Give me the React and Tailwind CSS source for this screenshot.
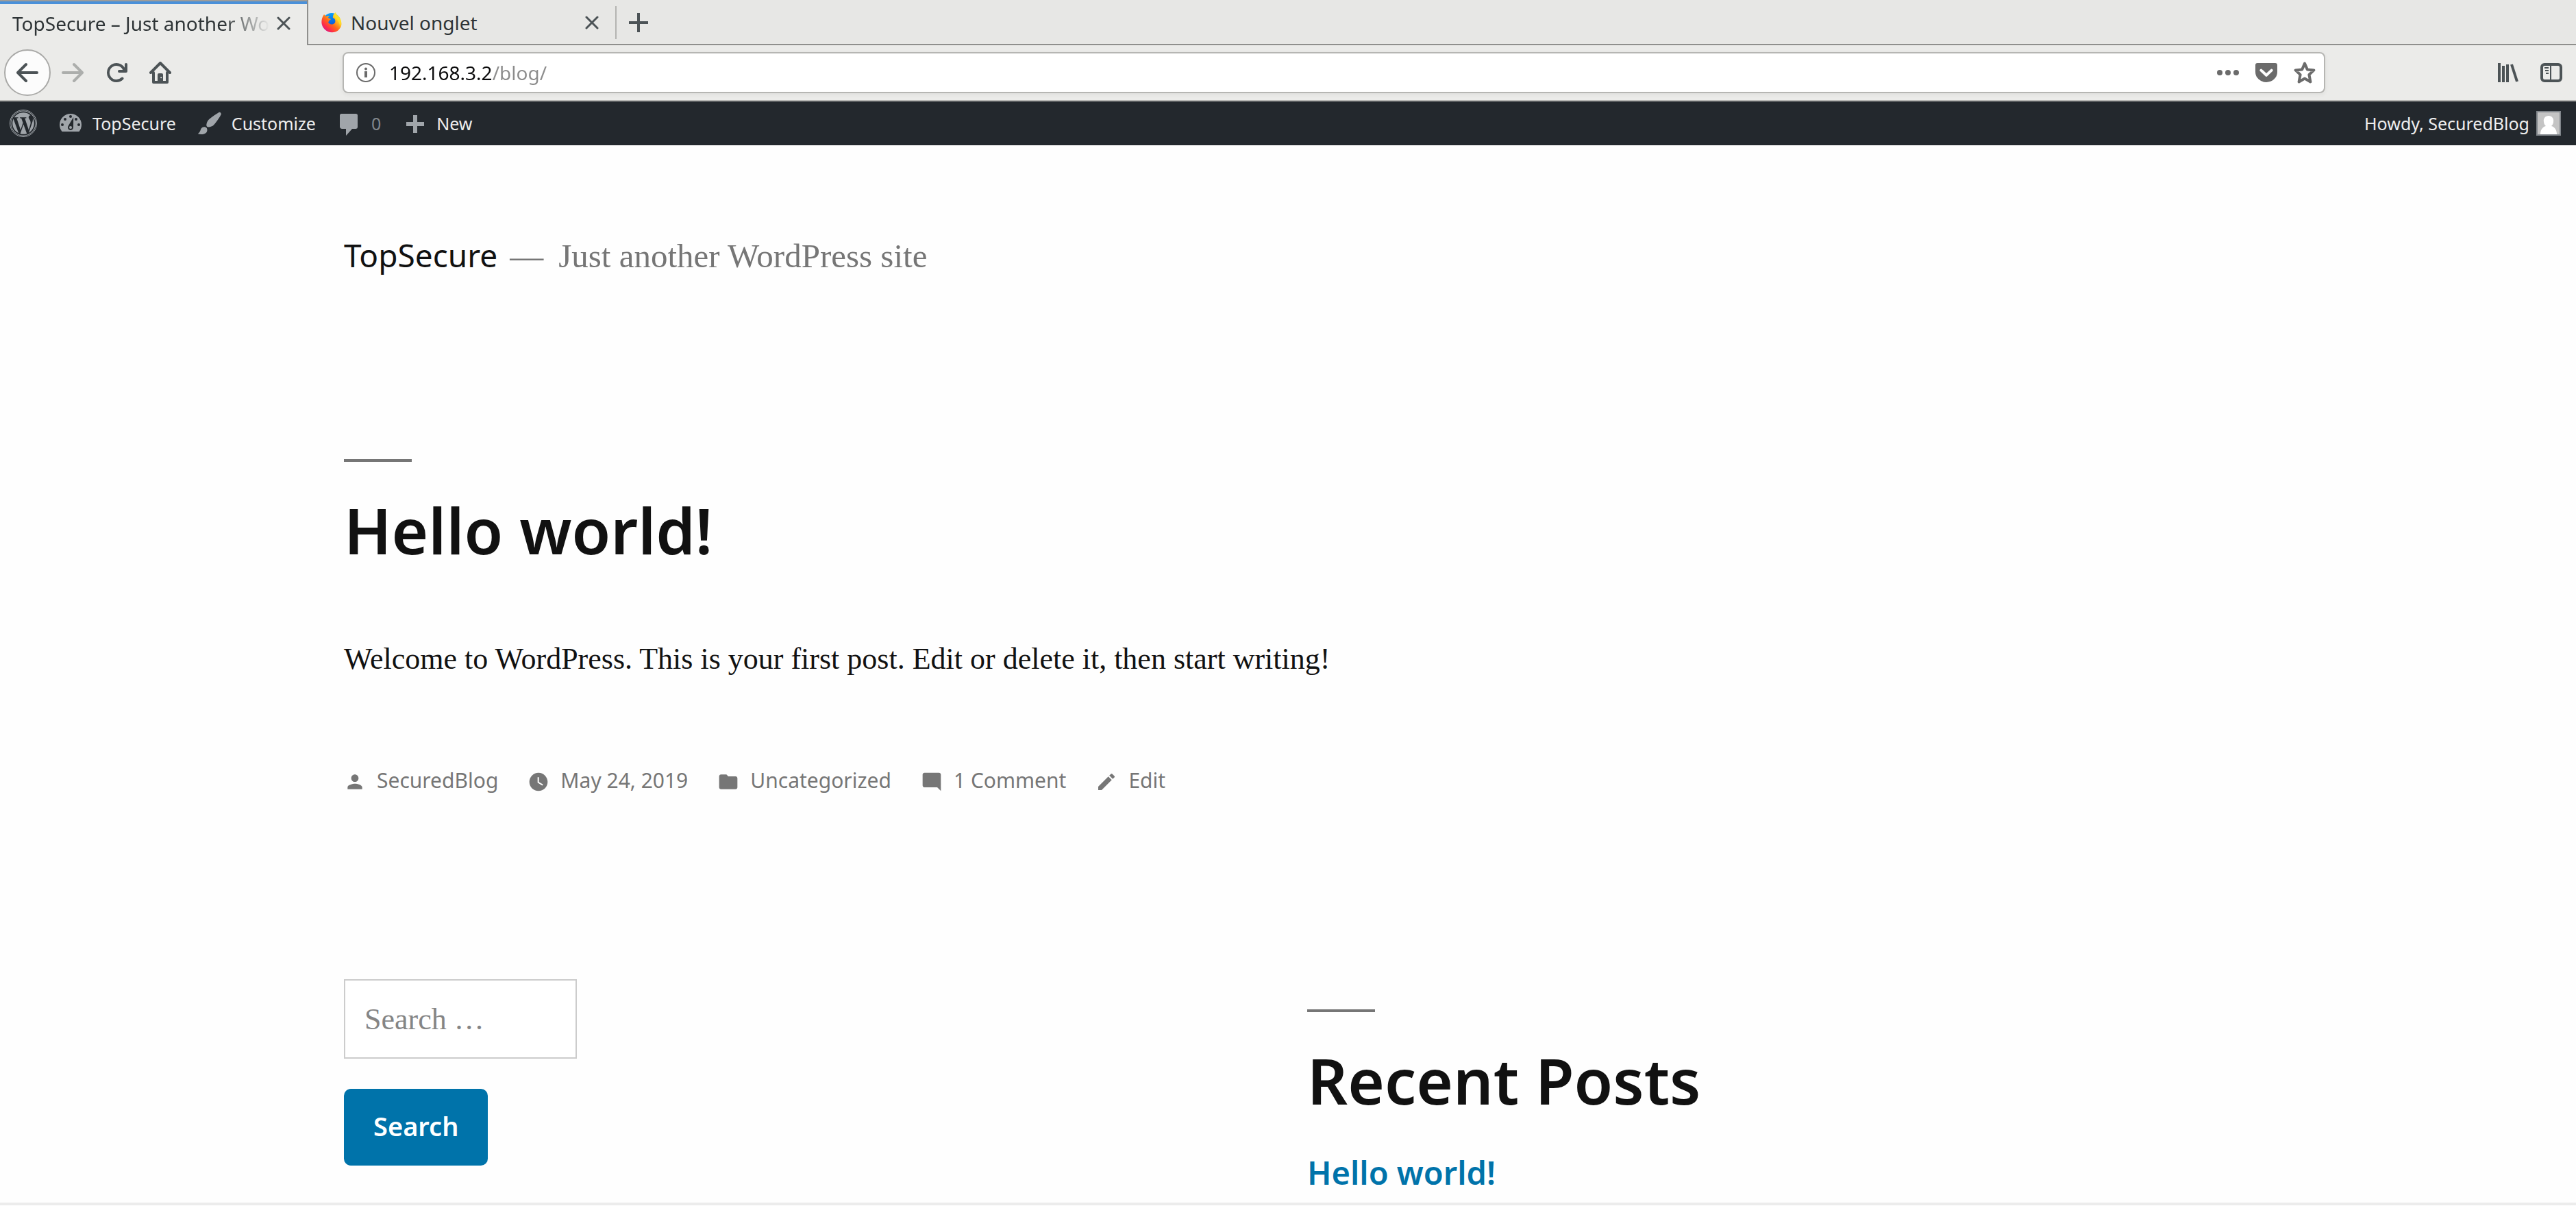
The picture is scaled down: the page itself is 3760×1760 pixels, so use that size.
import React from "react";
import { FaWordpress } from "react-icons/fa";
import { MdPerson, MdWatchLater, MdFolder, MdModeComment, MdEdit } from "react-icons/md";

const sans = "font-['Noto_Sans',sans-serif]";
const serif = "font-['Liberation_Serif',serif]";

function CloseIcon() {
  return (
    <svg viewBox="0 0 20 20" className="size-5" fill="none" stroke="#4c5356" strokeWidth="3" strokeLinecap="round" aria-hidden="true">
      <path d="M2 2l16 16M18 2L2 18" />
    </svg>
  );
}

function FirefoxIcon() {
  return (
    <svg viewBox="0 0 32 32" className="size-8 shrink-0" aria-hidden="true">
      <defs>
        <linearGradient id="flame" x1="0.85" y1="0.1" x2="0.15" y2="0.9">
          <stop offset="0" stopColor="#fff44f" />
          <stop offset="0.3" stopColor="#ffb81f" />
          <stop offset="0.55" stopColor="#ff6b1a" />
          <stop offset="0.8" stopColor="#ff2f45" />
          <stop offset="1" stopColor="#d6188a" />
        </linearGradient>
        <linearGradient id="globe" x1="0.3" y1="0" x2="0.6" y2="1">
          <stop offset="0" stopColor="#0aa5ff" />
          <stop offset="0.6" stopColor="#0a62e0" />
          <stop offset="1" stopColor="#2b2a9c" />
        </linearGradient>
      </defs>
      <circle cx="16" cy="15" r="13" fill="url(#globe)" />
      <path
        fill="url(#flame)"
        d="M5 4c1 1 2 2 3 3 1-1 3-1 5-1-1 1-2 2-2 3 1 1 3 1 4 2-1 1-2 2-3 2 0 1 0 2-1 2 1 4 7 5 10 1 1-3 0-6-3-7 0 0-1-5 4-8 0 3 3 4 6 8 4 8 3 13-2 18-6 5-15 4-20-1C0 20 0 11 5 4z"
      />
      <path fill="#ffe226" d="M22 1c0 3 3 4 6 8 3 6 2 10 0 13 0-5-2-8-5-11-3-3-4-6-1-10z" opacity="0.8" />
    </svg>
  );
}

const ARROW =
  "M15 7H3.414l4.293-4.293a1 1 0 0 0-1.414-1.414l-6 6a1 1 0 0 0 0 1.414l6 6a1 1 0 0 0 1.414-1.414L3.414 9H15a1 1 0 0 0 0-2z";

function Tabs() {
  return (
    <div className="flex h-[66px] bg-[#e7e7e5] text-[28px] leading-[40px] text-[#2e3436]">
      <div className="flex w-[448px] shrink-0 flex-col bg-[#ebebe9]">
        <div className="h-[6px] border-t-2 border-[#9c9c9a] bg-[#4a90d9]" />
        <div className="flex flex-1 items-center gap-[10px] pr-6 pb-1 pl-[18px]">
          <span className="flex-1 whitespace-nowrap [mask-image:linear-gradient(to_right,#000_82%,transparent)]">
            TopSecure – Just another Wo
          </span>
          <button aria-label="Close tab TopSecure" className="shrink-0">
            <CloseIcon />
          </button>
        </div>
      </div>
      <div className="flex flex-1 items-center border-b-2 border-l-2 border-[#8f8f8d] pt-[2px]">
        <div className="flex w-[448px] items-center gap-3 pr-6 pl-[18px]">
          <FirefoxIcon />
          <span className="flex-1">Nouvel onglet</span>
          <button aria-label="Close tab Nouvel onglet">
            <CloseIcon />
          </button>
        </div>
        <div className="h-12 w-[2px] bg-[#b4b4b1]" />
        <button aria-label="New tab" className="ml-[18px]">
          <svg viewBox="0 0 28 28" className="size-7" fill="none" stroke="#4c5356" strokeWidth="4" aria-hidden="true">
            <path d="M14 0v28M0 14h28" />
          </svg>
        </button>
      </div>
    </div>
  );
}

function NavButton({ label, children }) {
  return (
    <button aria-label={label} className="flex h-[68px] w-16 shrink-0 items-center justify-center text-[#4c5356]">
      {children}
    </button>
  );
}

function Toolbar() {
  return (
    <div className="flex h-[82px] items-center border-b-2 border-[#b6b6b3] bg-[#ebebe9] pr-1 pl-[6px]">
      <button aria-label="Back" className="flex size-[68px] shrink-0 items-center justify-center rounded-full border-2 border-[#aaaaa8] bg-[#fcfcfc] text-[#4c5356]">
        <svg viewBox="0 0 16 16" className="size-8" fill="currentColor"><path d={ARROW} /></svg>
      </button>
      <NavButton label="Forward">
        <svg viewBox="0 0 16 16" className="size-8 rotate-180 text-[#acaeac]" fill="currentColor"><path d={ARROW} /></svg>
      </NavButton>
      <NavButton label="Reload">
        <svg viewBox="0 0 16 16" className="size-8" fill="currentColor">
          <path d="M15 1a1 1 0 0 0-1 1v2.418A6.995 6.995 0 1 0 8 15a6.954 6.954 0 0 0 4.950-2.050 1 1 0 0 0-1.414-1.414A5.019 5.019 0 1 1 12.549 6H10a1 1 0 0 0 0 2h5a1 1 0 0 0 1-1V2a1 1 0 0 0-1-1z" />
        </svg>
      </NavButton>
      <NavButton label="Home">
        <svg viewBox="0 0 16 16" className="size-8" fill="none" stroke="currentColor" strokeWidth="2" strokeLinecap="round" strokeLinejoin="round">
          <path d="M1 8l7-7 7 7M3 8v7h10V8" />
          <path d="M6 15V9.500a1 1 0 0 1 1-1h2a1 1 0 0 1 1 1V15z" fill="currentColor" stroke="none" />
          <circle cx="8.600" cy="11.600" r=".5" fill="#ebebe9" stroke="none" />
        </svg>
      </NavButton>
      <div className="mr-[234px] ml-[234px] flex h-[60px] min-w-0 flex-1 items-center rounded-[8px] border-2 border-[#b6b6b3] bg-white pr-3 pl-[18px] text-[#6b6b6b] shadow-[0_2px_6px_rgba(0,0,0,0.06)]">
        <svg viewBox="0 0 28 28" className="size-7 shrink-0" fill="none" stroke="currentColor" aria-hidden="true">
          <circle cx="14" cy="14" r="13" strokeWidth="2" />
          <path d="M14 12v9" strokeWidth="4" />
          <circle cx="14" cy="8.500" r="2" fill="currentColor" stroke="none" />
        </svg>
        <input
          aria-label="Address"
          defaultValue="192.168.3.2/blog/"
          className="ml-5 h-12 min-w-0 flex-1 bg-[linear-gradient(90deg,#0c0c0d_151px,#8c8c8c_151px)] bg-clip-text text-[28px] leading-[40px] text-transparent outline-none"
        />
        <div className="flex items-center gap-6">
          <button aria-label="Page actions">
            <svg viewBox="0 0 16 16" className="size-8" fill="currentColor">
              <circle cx="2" cy="8" r="2" /><circle cx="8" cy="8" r="2" /><circle cx="14" cy="8" r="2" />
            </svg>
          </button>
          <button aria-label="Save to Pocket">
            <svg viewBox="0 0 16 16" className="size-8">
              <path fill="currentColor" d="M1.500 1h13A1.500 1.500 0 0 1 16 2.500V7.500a8 7.500 0 0 1-16 0V2.500A1.500 1.500 0 0 1 1.500 1z" />
              <path fill="none" stroke="#fff" strokeWidth="2" strokeLinecap="round" strokeLinejoin="round" d="M4.200 6.300L8 9.900l3.800-3.600" />
            </svg>
          </button>
          <button aria-label="Bookmark this page">
            <svg viewBox="0 0 16 16" className="size-8" fill="none" stroke="currentColor" strokeWidth="2" strokeLinejoin="round">
              <path d="M8 1.300l1.900 4.400 4.800.5-3.500 3.300 1 5.200L8 12.300l-4.200 2.400 1-5.200L1.300 6.200l4.800-.5z" />
            </svg>
          </button>
        </div>
      </div>
      <NavButton label="Library">
        <svg viewBox="0 0 32 32" className="size-8" fill="none" stroke="currentColor" strokeWidth="4">
          <path d="M4 2v28M10 6v24M16 4v26M22 4l8 25" />
        </svg>
      </NavButton>
      <NavButton label="Sidebar">
        <svg viewBox="0 0 32 32" className="size-8" fill="none" stroke="currentColor">
          <rect x="2" y="4" width="28" height="24" rx="4" strokeWidth="4" />
          <path d="M15 4v24M6 9h6M7 13h5M8 17h4" strokeWidth="2" />
        </svg>
      </NavButton>
    </div>
  );
}

const BAR_ICONS = {
  dashboard: (
    <>
      <path d="M3.760 16h12.480c1.100-1.370 1.760-3.110 1.760-5 0-4.420-3.580-8-8-8s-8 3.580-8 8c0 1.890.66 3.630 1.760 5z" />
      <g className="fill-[#23282d]">
        <circle cx="10" cy="5" r="1" /><circle cx="6" cy="7" r="1" /><circle cx="14" cy="7" r="1" />
        <circle cx="4" cy="11" r="1" /><circle cx="16" cy="11" r="1" />
        <path d="M12.100 5.500L12 13a2 2 0 1 1-3.600-1.200z" />
      </g>
      <circle cx="10" cy="13" r="1" />
    </>
  ),
  brush: (
    <path d="M18.330 3.570s.27-.8-.31-1.360c-.53-.52-1.220-.24-1.220-.24-.61.3-5.760 3.470-7.670 5.570-.86.96-2.060 3.790-1.090 4.820.92.98 3.960-.17 4.790-1 2.060-2.060 5.210-7.170 5.500-7.790zM1.400 17.650c2.370-1.560 1.460-3.410 3.230-4.640.93-.65 2.220-.62 3.080.29.63.67.8 2.570-.16 3.460-1.570 1.450-4 1.550-6.150.89z" />
  ),
  comment: <path d="M4.500 3h10a1.200 1.200 0 0 1 1.500 1.200v8.600a1.200 1.200 0 0 1-1.200 1.200H12l-4.500 5v-5h-3A1.500 1.500 0 0 1 3 12.800V4.200A1.200 1.200 0 0 1 4.500 3z" />,
  plus: <path d="M17 9v3h-5v5H9v-5H4V9h5V4h3v5z" />,
};

function BarLink({ icon, children }) {
  return (
    <a href="#" className="flex items-center gap-3">
      <svg viewBox="0 0 20 20" className="size-10" fill="#a0a5aa" aria-hidden="true">{BAR_ICONS[icon]}</svg>
      {children}
    </a>
  );
}

function AdminBar() {
  return (
    <nav aria-label="Toolbar" className="flex h-16 items-center justify-between bg-[#23282d] pr-[22px] pl-[14px] text-[25px] leading-[40px] text-[#eeeeee]">
      <div className="flex items-center gap-[29px]">
        <a href="#" aria-label="About WordPress">
          <FaWordpress className="size-10 rounded-full border border-[#a0a5aa] text-[#a0a5aa]" />
        </a>
        <BarLink icon="dashboard">TopSecure</BarLink>
        <BarLink icon="brush">Customize</BarLink>
        <BarLink icon="comment"><span className="text-[#9ca1a6]/80">0</span></BarLink>
        <BarLink icon="plus">New</BarLink>
      </div>
      <a href="#" className="flex items-center gap-[10px]">
        Howdy, SecuredBlog
        <svg viewBox="0 0 36 36" className="size-9" aria-hidden="true">
          <rect width="36" height="36" fill="#82878c" />
          <path fill="#c4c4c4" d="M2 2h32v32H2z" />
          <path fill="#fff" d="M18 7c5 0 8 4 7 9 0 3-2 5-3 6 5 1 8 6 8 12H6c0-6 3-11 8-12-1-1-3-3-3-6-1-5 2-9 7-9z" />
        </svg>
      </a>
    </nav>
  );
}

function Heading({ children, as: Tag }) {
  return (
    <>
      <div className="h-1 w-[99px] bg-[#767676]" />
      <Tag className={sans + " mt-[42px] text-[92px] leading-[116px] font-semibold text-[#111111]"}>{children}</Tag>
    </>
  );
}

const META = [
  [MdPerson, "SecuredBlog"],
  [MdWatchLater, "May 24, 2019"],
  [MdFolder, "Uncategorized"],
  [MdModeComment, "1 Comment"],
  [MdEdit, "Edit"],
];

export default function App() {
  return (
    <div className={sans + " min-h-screen bg-[#fefefe]"}>
      <header>
        <Tabs />
        <Toolbar />
        <AdminBar />
      </header>
      <div className="mx-auto w-full max-w-[2756px] pt-[130px]">
        <div className="flex items-baseline leading-[60px]">
          <a href="#" className="text-[46px] text-[#111111]">TopSecure</a>
          <p className={serif + " ml-[18px] flex gap-[22px] text-[49px] text-[#767676]"}>
            <span>—</span>
            <span>Just another WordPress site</span>
          </p>
        </div>
        <article className="mt-[266px]">
          <Heading as="h1">Hello world!</Heading>
          <p className={serif + " mt-[90px] text-[44px] leading-[80px] text-[#111111]"}>
            Welcome to WordPress. This is your first post. Edit or delete it, then start writing!
          </p>
          <div className="mt-[113px] flex flex-wrap gap-x-[43px] text-[30px] leading-[48px] text-[#767676]">
            {META.map(([Icon, label]) => (
              <a key={label} href="#" className="flex items-center gap-4">
                <Icon className="mt-1 size-8" aria-hidden="true" />
                {label}
              </a>
            ))}
          </div>
        </article>
        <aside className="mt-[266px] grid grid-cols-2 gap-x-14">
          <form className="flex flex-col items-start gap-11" onSubmit={(e) => e.preventDefault()}>
            <input
              type="search"
              aria-label="Search for"
              placeholder="Search …"
              className={serif + " h-[116px] w-[340px] border-2 border-[#cccccc] bg-white px-7 text-[44px] text-[#111111] placeholder:text-[#858585]"}
            />
            <button className="h-28 rounded-[10px] bg-[#0073aa] px-[43px] pb-1 text-[38px] leading-[48px] font-semibold text-white">Search</button>
          </form>
          <section className="pt-11">
            <Heading as="h2">Recent Posts</Heading>
            <a href="#" className="mt-[46px] block text-[47px] leading-[60px] font-semibold text-[#0073aa]">Hello world!</a>
          </section>
        </aside>
      </div>
      <div className="mt-[14px] h-1 bg-[#ececec]" />
    </div>
  );
}
